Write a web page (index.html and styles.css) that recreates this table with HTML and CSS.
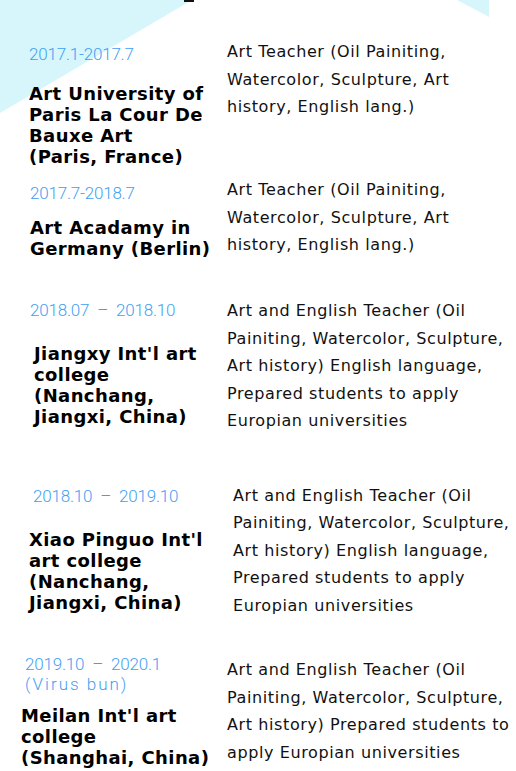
FILE: index.html
```html
<!DOCTYPE html>
<html lang="en">
<head>
    <meta charset="UTF-8">
    <meta name="viewport" content="width=device-width, initial-scale=1.0">
    <title>Work Experience</title>
    <link rel="stylesheet" href="styles.css">
</head>
<body>
    <svg class="backdrop" width="516" height="120" viewBox="0 0 516 120" aria-hidden="true">
        <polygon points="0,0 192,0 0,113" fill="#d6f6fc"/>
        <polygon points="457,0 489,0 489,17" fill="#d6f6fc"/>
        <rect x="184" y="0" width="10" height="2" fill="#111"/>
    </svg>

    <main class="timeline">
        <div class="job job-1">
            <div class="job-head">
                <p class="date">2017.1-2017.7</p>
                <h3 class="place">Art University of<br>Paris La Cour De<br>Bauxe Art<br>(Paris, France)</h3>
            </div>
            <p class="duty">Art Teacher (Oil Painiting,<br>Watercolor, Sculpture, Art<br>history, English lang.)</p>
        </div>

        <div class="job job-2">
            <div class="job-head">
                <p class="date">2017.7-2018.7</p>
                <h3 class="place">Art Acadamy in<br>Germany (Berlin)</h3>
            </div>
            <p class="duty">Art Teacher (Oil Painiting,<br>Watercolor, Sculpture, Art<br>history, English lang.)</p>
        </div>

        <div class="job job-3">
            <div class="job-head">
                <p class="date">2018.07 – 2018.10</p>
                <h3 class="place">Jiangxy Int'l art<br>college<br>(Nanchang,<br>Jiangxi, China)</h3>
            </div>
            <p class="duty">Art and English Teacher (Oil<br>Painiting, Watercolor, Sculpture,<br>Art history) English language,<br>Prepared students to apply<br>Europian universities</p>
        </div>

        <div class="job job-4">
            <div class="job-head">
                <p class="date">2018.10 – 2019.10</p>
                <h3 class="place">Xiao Pinguo Int'l<br>art college<br>(Nanchang,<br>Jiangxi, China)</h3>
            </div>
            <p class="duty">Art and English Teacher (Oil<br>Painiting, Watercolor, Sculpture,<br>Art history) English language,<br>Prepared students to apply<br>Europian universities</p>
        </div>

        <div class="job job-5">
            <div class="job-head">
                <p class="date">2019.10 – 2020.1<br><span class="date-note">(Virus bun)</span></p>
                <h3 class="place">Meilan Int'l art<br>college<br>(Shanghai, China)</h3>
            </div>
            <p class="duty">Art and English Teacher (Oil<br>Painiting, Watercolor, Sculpture,<br>Art history) Prepared students to<br>apply Europian universities</p>
        </div>
    </main>
</body>
</html>
```

FILE: styles.css
```css
body {
    margin: 0;
    background: #fff;
    font-family: "DejaVu Sans", sans-serif;
    color: #111;
    overflow: hidden;
}

.backdrop {
    position: absolute;
    top: 0;
    left: 0;
    z-index: -1;
}

.timeline {
    padding: 0 0 0 29px;
}

.job {
    display: grid;
    grid-template-columns: 198px 1fr;
    align-items: start;
}

.job-head {
    display: flex;
    flex-direction: column;
}

.date {
    margin: 0;
    font-family: Roboto, "DejaVu Sans", sans-serif;
    font-size: 17px;
    line-height: 20px;
    font-weight: 300;
    letter-spacing: -0.2px;
    word-spacing: 4px;
    color: #3f9ff2;
    white-space: nowrap;
}

.date-note {
    letter-spacing: 2px;
    word-spacing: 0;
}

.place {
    margin: 0;
    font-size: 18px;
    line-height: 21px;
    letter-spacing: 0.4px;
    font-weight: 700;
    color: #000;
    white-space: nowrap;
}

.duty {
    margin: 0;
    font-size: 16px;
    line-height: 27.5px;
    letter-spacing: 0.6px;
    white-space: nowrap;
}

/* row offsets */
.job-1 { margin-top: 38px; }
.job-1 .job-head { padding-top: 6px; }
.job-1 .place { margin-top: 19px; }

.job-2 { margin-top: 9px; }
.job-2 .job-head { padding-top: 7px; padding-left: 1px; }
.job-2 .place { margin-top: 14px; }

.job-3 { margin-top: 38px; }
.job-3 .job-head { padding-top: 3px; padding-left: 1px; }
.job-3 .place { margin-top: 23px; padding-left: 4px; }

.job-4 { margin-top: 47px; }
.job-4 .job-head { padding-top: 4px; }
.job-4 .date { padding-left: 4px; }
.job-4 .duty { padding-left: 6px; }
.job-4 .place { margin-top: 23px; }

.job-5 { margin-top: 37px; }
.job-5 .job-head { margin-top: -2px; margin-left: -8px; }
.job-5 .date { padding-left: 4px; }
.job-5 .place { margin-top: 11px; }
```
